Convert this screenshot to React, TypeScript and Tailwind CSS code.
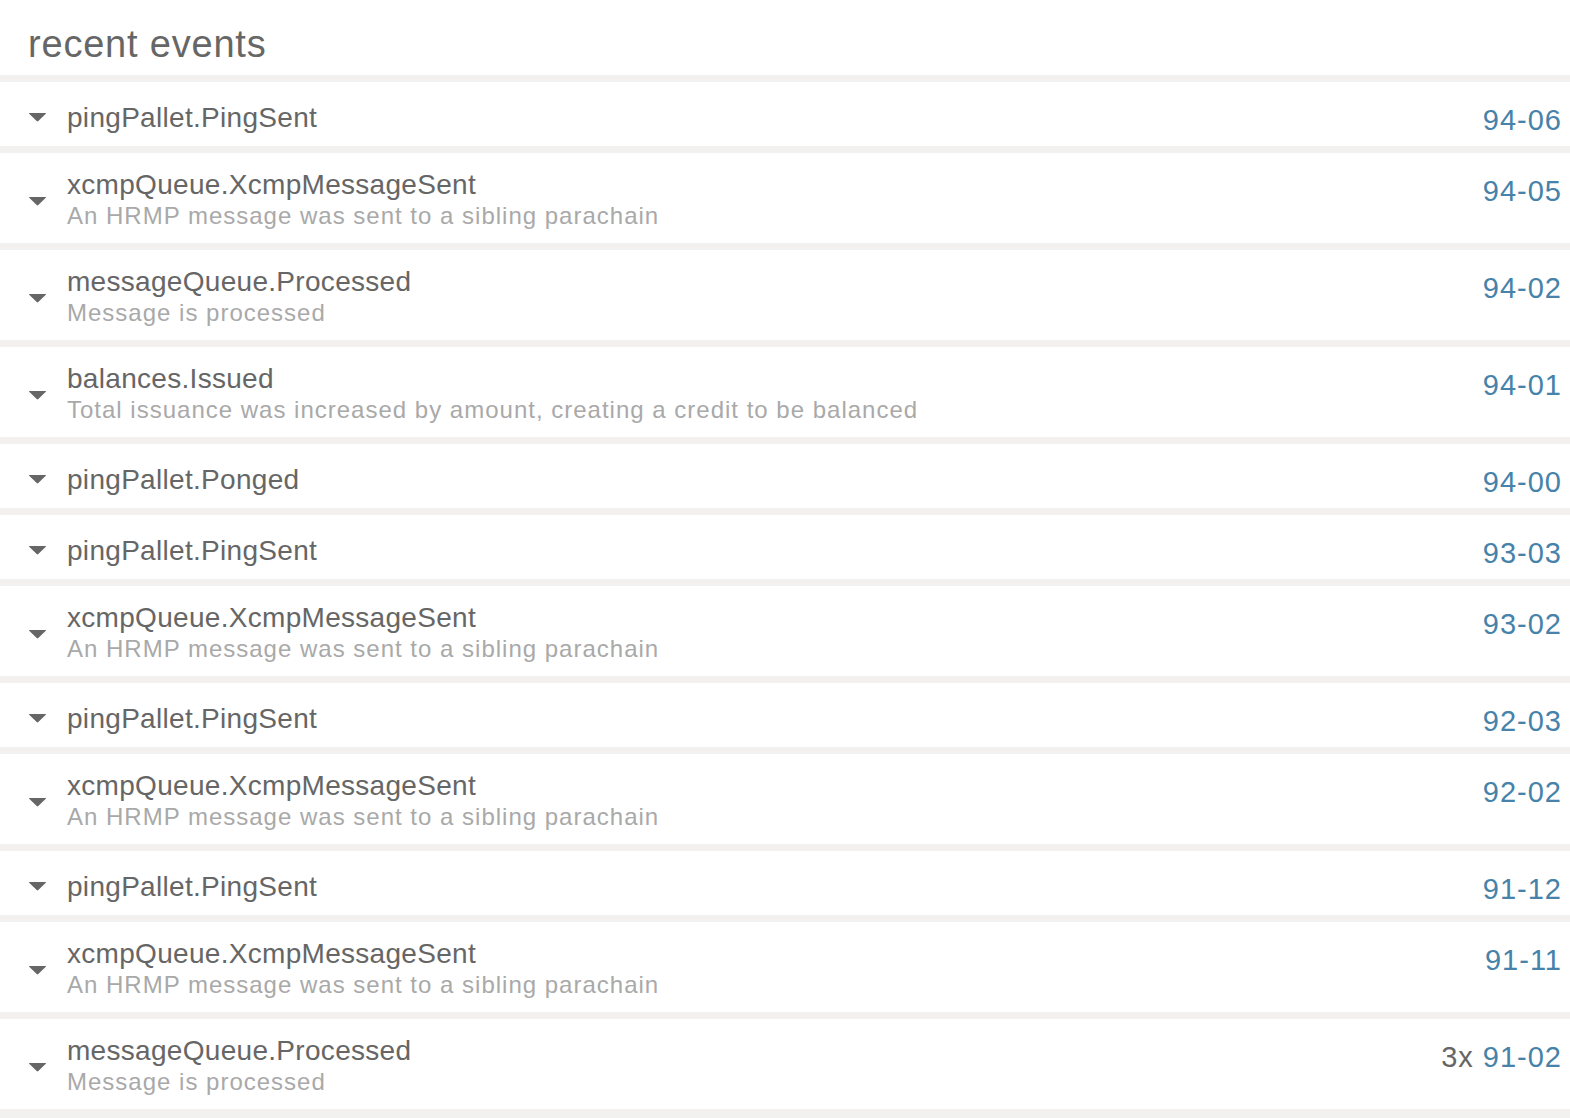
const events = [
  { name: "pingPallet.PingSent", id: "94-06" },
  { name: "xcmpQueue.XcmpMessageSent", doc: "An HRMP message was sent to a sibling parachain", id: "94-05" },
  { name: "messageQueue.Processed", doc: "Message is processed", id: "94-02" },
  { name: "balances.Issued", doc: "Total issuance was increased by amount, creating a credit to be balanced", id: "94-01" },
  { name: "pingPallet.Ponged", id: "94-00" },
  { name: "pingPallet.PingSent", id: "93-03" },
  { name: "xcmpQueue.XcmpMessageSent", doc: "An HRMP message was sent to a sibling parachain", id: "93-02" },
  { name: "pingPallet.PingSent", id: "92-03" },
  { name: "xcmpQueue.XcmpMessageSent", doc: "An HRMP message was sent to a sibling parachain", id: "92-02" },
  { name: "pingPallet.PingSent", id: "91-12" },
  { name: "xcmpQueue.XcmpMessageSent", doc: "An HRMP message was sent to a sibling parachain", id: "91-11" },
  { name: "messageQueue.Processed", doc: "Message is processed", id: "91-02", count: 3 },
];

function Caret() {
  return (
    <svg width="19" height="10" viewBox="0 0 19 10" className="mt-[5px]">
      <path d="M1.5 1 L17.5 1 Q18.5 1 17.8 1.8 L10.3 9 Q9.5 9.8 8.7 9 L1.2 1.8 Q0.5 1 1.5 1 Z" fill="#666666" />
    </svg>
  );
}

export default function App() {
  return (
    <div className="min-h-screen bg-[#f2f1ef] font-['Liberation_Sans',Arial,sans-serif]">
      <div className="bg-white h-[75px] pl-[28px] pt-[25px]">
        <h1 className="text-[38px] leading-[38px] text-[#666666] tracking-[0.8px]">recent events</h1>
      </div>
      <div className="flex flex-col gap-[7px] pt-[7px] pb-[7px]">
        {events.map((ev, i) => (
          <div key={i} className="flex bg-white">
            <div className="w-[67px] shrink-0 pl-[28px] flex items-center">
              <Caret />
            </div>
            <div className={`flex-1 pb-3 ${ev.doc ? "pt-4" : "pt-5"}`}>
              <div className="text-[28px] leading-[32px] text-[#666666] tracking-[0.3px]">{ev.name}</div>
              {ev.doc && (
                <div className="text-[24px] leading-[30px] text-[#a9a9a9] tracking-[1px]">{ev.doc}</div>
              )}
            </div>
            <div className="pt-[22px] pr-[8px] text-[29px] leading-[32px] tracking-[1px] whitespace-nowrap">
              {ev.count && <span className="text-[#666666]">{ev.count}x </span>}
              <span className="text-[#4682a9]">{ev.id}</span>
            </div>
          </div>
        ))}
      </div>
    </div>
  );
}
